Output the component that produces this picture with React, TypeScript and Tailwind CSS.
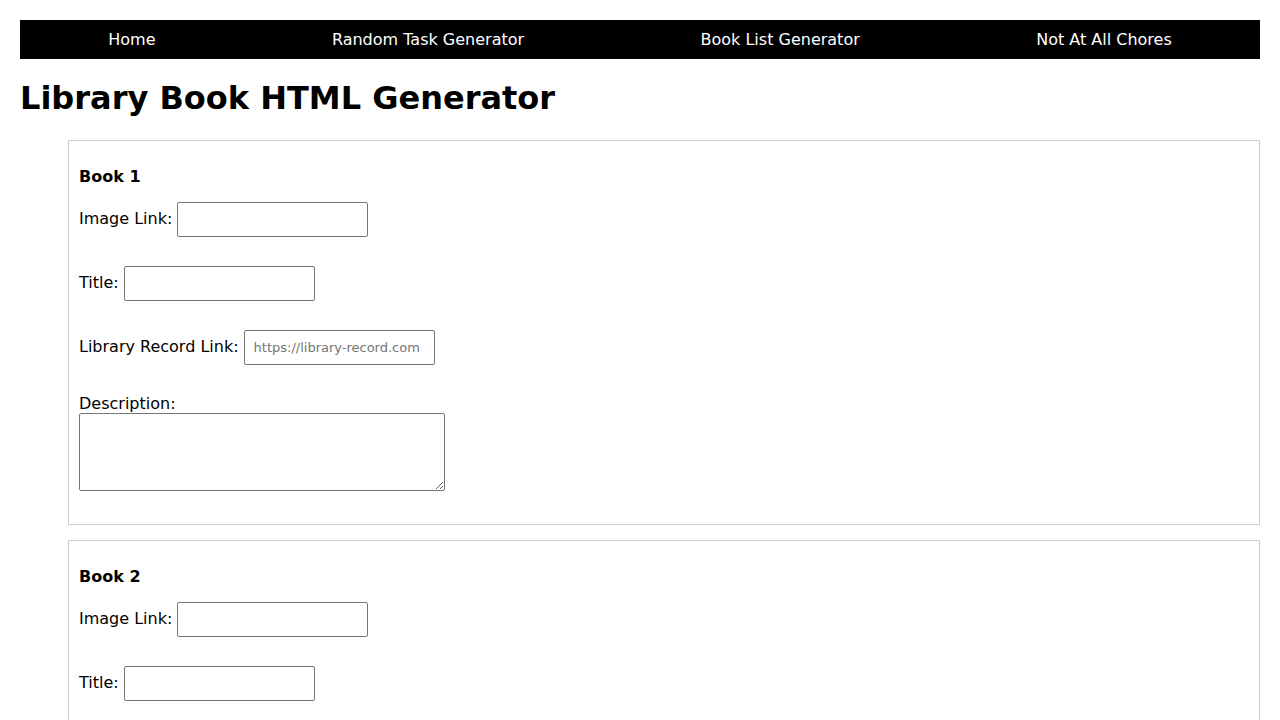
import React from 'react';

const NAV_LINKS = ['Home', 'Random Task Generator', 'Book List Generator', 'Not At All Chores'];

const BOOKS = [1, 2];

function Field({ label, placeholder }: { label: string; placeholder?: string }) {
  return (
    <div className="flex items-center h-[35px] mb-[29px]">
      <label className="leading-[19px] -mt-[2px]">{label}</label>
      <input
        type="text"
        placeholder={placeholder}
        className="ml-[5px] w-[191px] h-[35px] border border-[#767676] rounded-[2px] px-[9px] text-[13px] placeholder:text-[#757575] bg-white"
      />
    </div>
  );
}

function BookCard({ n }: { n: number }) {
  return (
    <div className="ml-[48px] mb-[15px] border border-[#cccccc] px-[10px] pt-[26px] pb-[33px]">
      <h4 className="font-bold leading-[19px] mb-[16px]">Book {n}</h4>
      <Field label="Image Link:" />
      <Field label="Title:" />
      <Field label="Library Record Link:" placeholder="https://library-record.com" />
      <label className="block leading-[19px]">Description:</label>
      <textarea className="block w-[366px] h-[78px] border border-[#767676] rounded-[2px] bg-white" />
    </div>
  );
}

export default function App() {
  return (
    <div className="min-h-screen bg-white text-black font-['DejaVu_Sans',sans-serif] text-base p-[20px]">
      <nav className="h-[39px] bg-black flex items-center justify-around text-white">
        {NAV_LINKS.map(link => (
          <a key={link} href="#" className="leading-[19px]">
            {link}
          </a>
        ))}
      </nav>
      <h1 className="text-[32px] font-bold leading-[37px] mt-[21px] mb-[23px]">Library Book HTML Generator</h1>
      {BOOKS.map(n => (
        <BookCard key={n} n={n} />
      ))}
    </div>
  );
}
